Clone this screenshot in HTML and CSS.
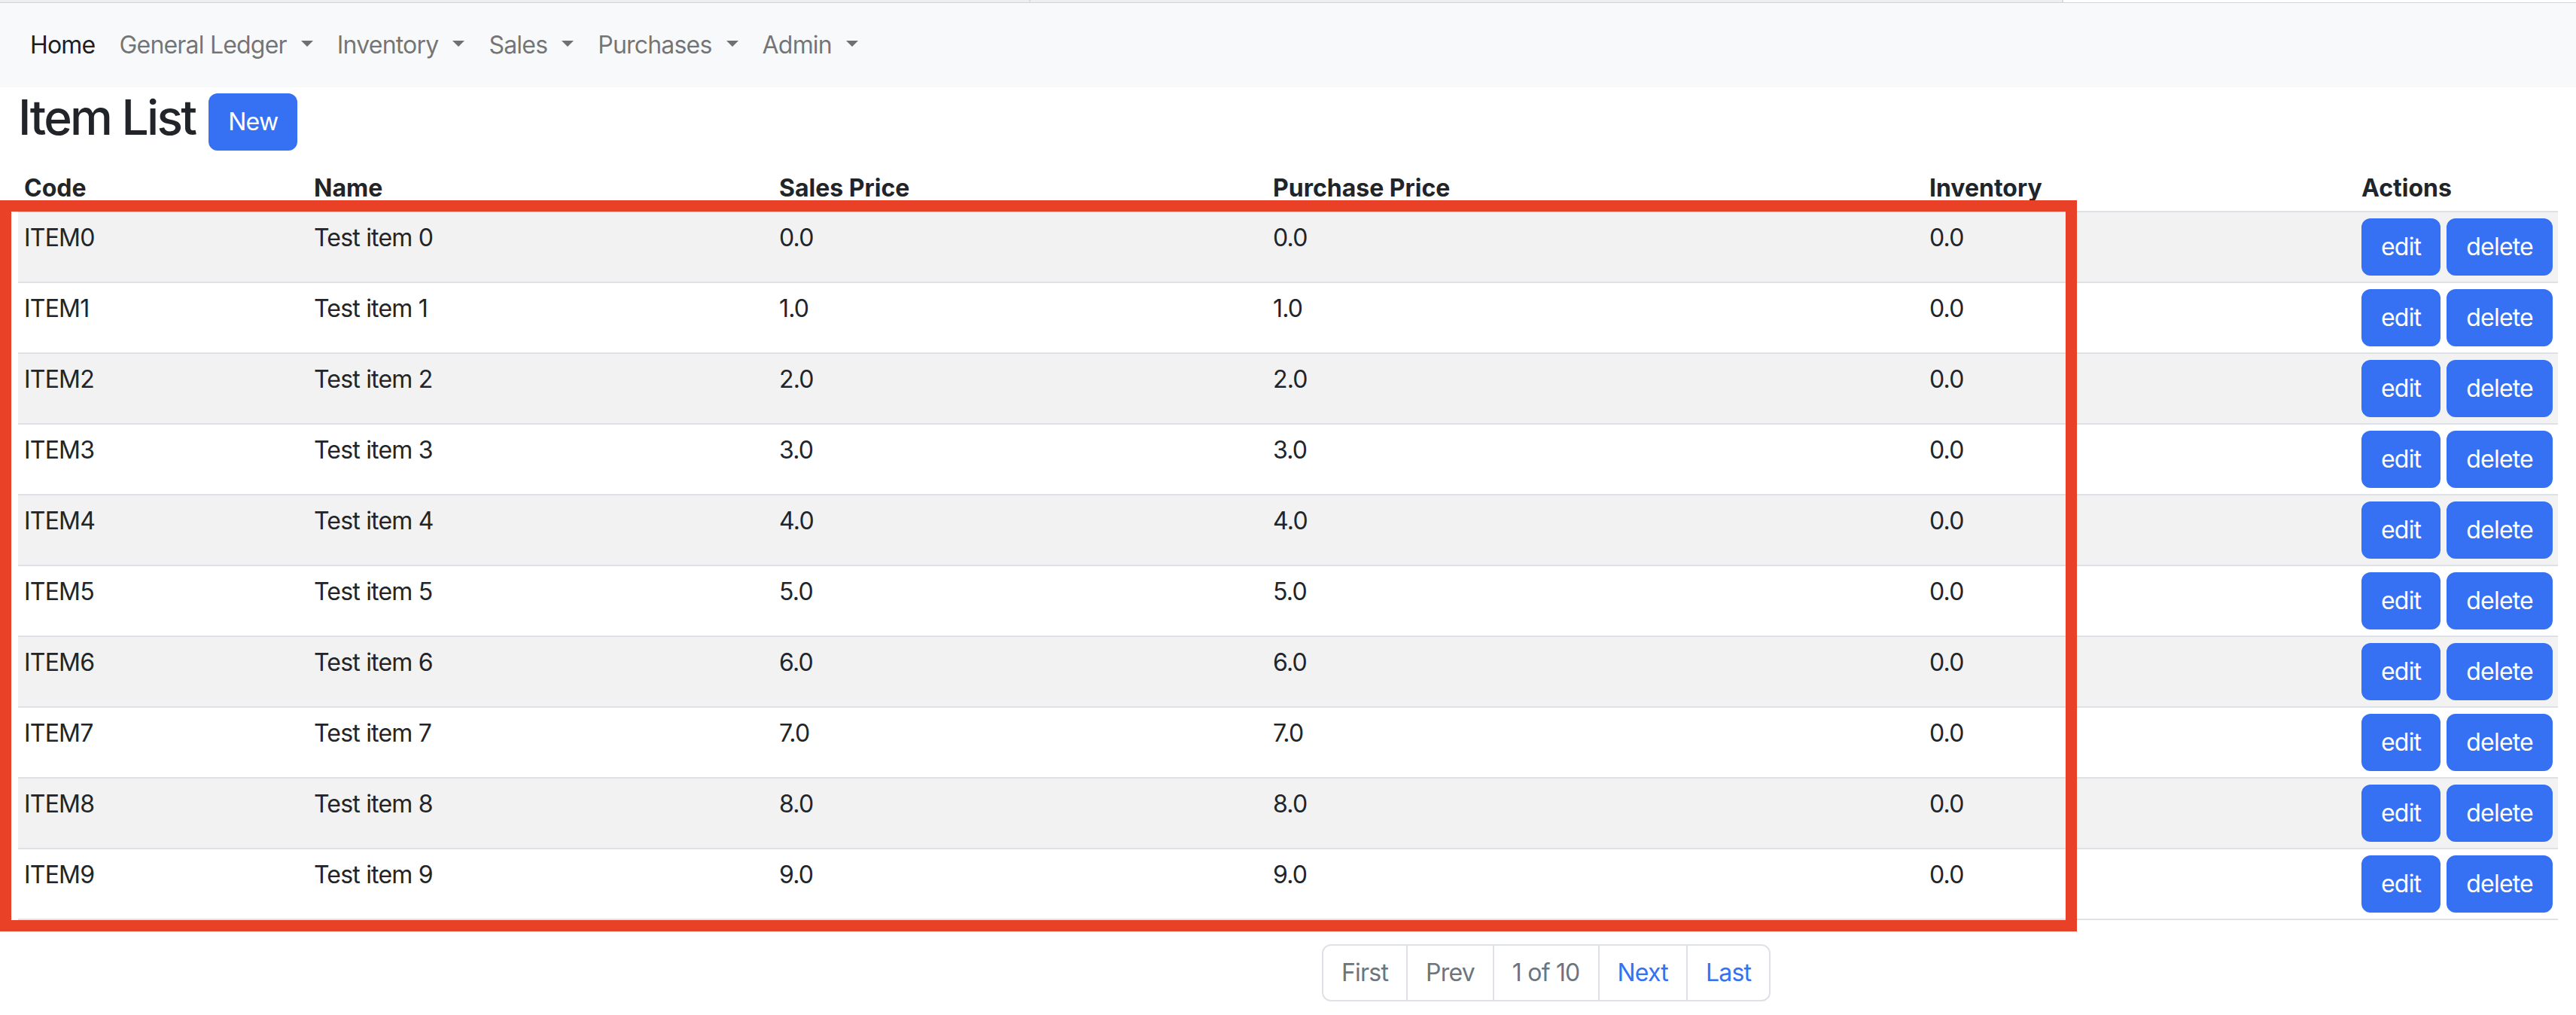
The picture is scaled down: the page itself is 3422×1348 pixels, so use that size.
FILE: index.html
```html
<!DOCTYPE html>
<html lang="en">
<head>
<meta charset="utf-8">
<title>Item List</title>
<link rel="stylesheet" href="styles.css">
</head>
<body>
<div class="chrome">
  <span class="seg seg-a"></span>
  <span class="seg seg-b"></span>
  <span class="seg seg-c"></span>
</div>
<nav class="navbar">
  <ul class="nav">
    <li><a class="nav-link active">Home</a></li>
    <li><a class="nav-link dd">General Ledger</a></li>
    <li><a class="nav-link dd">Inventory</a></li>
    <li><a class="nav-link dd">Sales</a></li>
    <li><a class="nav-link dd">Purchases</a></li>
    <li><a class="nav-link dd">Admin</a></li>
  </ul>
</nav>
<main class="container">
  <div class="title-row">
    <h2 class="title">Item List</h2>
    <button class="btn">New</button>
  </div>
  <table class="table">
    <colgroup>
      <col class="c-code"><col class="c-name"><col class="c-sales"><col class="c-purchase"><col class="c-inv"><col class="c-actions">
    </colgroup>
    <thead>
      <tr><th>Code</th><th>Name</th><th>Sales Price</th><th>Purchase Price</th><th>Inventory</th><th>Actions</th></tr>
    </thead>
    <tbody>
      <tr><td>ITEM0</td><td>Test item 0</td><td>0.0</td><td>0.0</td><td>0.0</td><td class="act"><div class="actions"><button class="btn">edit</button><button class="btn">delete</button></div></td></tr>
      <tr><td>ITEM1</td><td>Test item 1</td><td>1.0</td><td>1.0</td><td>0.0</td><td class="act"><div class="actions"><button class="btn">edit</button><button class="btn">delete</button></div></td></tr>
      <tr><td>ITEM2</td><td>Test item 2</td><td>2.0</td><td>2.0</td><td>0.0</td><td class="act"><div class="actions"><button class="btn">edit</button><button class="btn">delete</button></div></td></tr>
      <tr><td>ITEM3</td><td>Test item 3</td><td>3.0</td><td>3.0</td><td>0.0</td><td class="act"><div class="actions"><button class="btn">edit</button><button class="btn">delete</button></div></td></tr>
      <tr><td>ITEM4</td><td>Test item 4</td><td>4.0</td><td>4.0</td><td>0.0</td><td class="act"><div class="actions"><button class="btn">edit</button><button class="btn">delete</button></div></td></tr>
      <tr><td>ITEM5</td><td>Test item 5</td><td>5.0</td><td>5.0</td><td>0.0</td><td class="act"><div class="actions"><button class="btn">edit</button><button class="btn">delete</button></div></td></tr>
      <tr><td>ITEM6</td><td>Test item 6</td><td>6.0</td><td>6.0</td><td>0.0</td><td class="act"><div class="actions"><button class="btn">edit</button><button class="btn">delete</button></div></td></tr>
      <tr><td>ITEM7</td><td>Test item 7</td><td>7.0</td><td>7.0</td><td>0.0</td><td class="act"><div class="actions"><button class="btn">edit</button><button class="btn">delete</button></div></td></tr>
      <tr><td>ITEM8</td><td>Test item 8</td><td>8.0</td><td>8.0</td><td>0.0</td><td class="act"><div class="actions"><button class="btn">edit</button><button class="btn">delete</button></div></td></tr>
      <tr><td>ITEM9</td><td>Test item 9</td><td>9.0</td><td>9.0</td><td>0.0</td><td class="act"><div class="actions"><button class="btn">edit</button><button class="btn">delete</button></div></td></tr>
    </tbody>
  </table>
  <nav class="pager">
    <ul class="pagination">
      <li class="page-item"><span class="page-link muted">First</span></li>
      <li class="page-item"><span class="page-link muted">Prev</span></li>
      <li class="page-item"><span class="page-link muted">1 of 10</span></li>
      <li class="page-item"><span class="page-link link">Next</span></li>
      <li class="page-item"><span class="page-link link">Last</span></li>
    </ul>
  </nav>
</main>
<div class="annot"></div>
</body>
</html>
```
FILE: styles.css
```css
html, body {
  margin: 0;
  padding: 0;
  background: #ffffff;
}
body {
  font-family: Inter, "Liberation Sans", Arial, sans-serif;
  font-size: 32px;
  line-height: 48px;
  letter-spacing: -0.8px;
  color: #212529;
  position: relative;
  min-height: 1348px;
}

/* thin browser strip at top */
.chrome {
  display: flex;
  height: 3px;
  border-bottom: 1px solid #d4d4d4;
}
.seg { display: block; height: 100%; }
.seg-a { width: 1367px; background: #efefef; border-right: 2px solid #dcdcdc; }
.seg-b { width: 1370px; background: #efefef; border-right: 2px solid #dcdcdc; }
.seg-c { flex: 1; background: #ffffff; }

/* navbar */
.navbar {
  background: #f8f9fa;
  padding: 16px 24px;
}
.nav {
  list-style: none;
  margin: 0;
  padding: 0;
  display: flex;
}
.nav-link {
  display: block;
  padding: 16px 16px;
  line-height: 48px;
  color: rgba(0, 0, 0, 0.55);
  text-decoration: none;
}
.nav-link.active { color: rgba(0, 0, 0, 0.9); }
.nav-link.dd::after {
  content: "";
  display: inline-block;
  margin-left: 19px;
  vertical-align: 9px;
  border-top: 8px solid;
  border-right: 8px solid transparent;
  border-left: 8px solid transparent;
  border-bottom: 0;
}

/* page */
.container {
  padding: 0 24px;
}
.title-row {
  display: flex;
  align-items: flex-start;
  margin-top: 8px;
  margin-bottom: 16px;
  height: 76px;
}
.title {
  margin: -6px 18px 0 0;
  font-size: 64px;
  line-height: 76px;
  font-weight: 500;
  letter-spacing: -2.7px;
}
.btn {
  font-family: inherit;
  font-size: 32px;
  line-height: 48px;
  letter-spacing: -0.8px;
  padding: 12px 24px;
  border: 2px solid #3670f3;
  border-radius: 12px;
  background: #3670f3;
  color: #ffffff;
  cursor: pointer;
  white-space: nowrap;
}

/* table */
.table {
  width: 3374px;
  table-layout: fixed;
  border-collapse: collapse;
  margin-bottom: 32px;
}
.c-code { width: 385px; }
.c-name { width: 618px; }
.c-sales { width: 656px; }
.c-purchase { width: 872px; }
.c-inv { width: 574px; }
.c-actions { width: 269px; }
.table th, .table td {
  padding: 10px 8px 6px;
  text-align: left;
  vertical-align: top;
  border-bottom: 2px solid #dee2e6;
  white-space: nowrap;
}
.table th {
  font-weight: 700;
  letter-spacing: 0;
}
.table td.act { padding: 8px 8px; }
.table tbody tr:nth-child(odd) td { background: #f2f2f2; }
.actions {
  display: flex;
  gap: 8px;
}

/* pagination */
.pager {
  margin-left: 1732px;
}
.pagination {
  list-style: none;
  margin: 0;
  padding: 0;
  display: inline-flex;
}
.page-link {
  display: block;
  padding: 12px 24px;
  line-height: 48px;
  border: 2px solid #dee2e6;
  margin-left: -2px;
  background: #ffffff;
}
.page-item:first-child .page-link {
  margin-left: 0;
  border-radius: 12px 0 0 12px;
}
.page-item:last-child .page-link {
  border-radius: 0 12px 12px 0;
}
.muted { color: #6c757d; }
.link { color: #3670f3; }

/* red annotation frame over the table body */
.annot {
  position: absolute;
  left: 0;
  top: 266px;
  width: 2759px;
  height: 971px;
  box-sizing: border-box;
  border: 15px solid #e94128;
  pointer-events: none;
}
```
